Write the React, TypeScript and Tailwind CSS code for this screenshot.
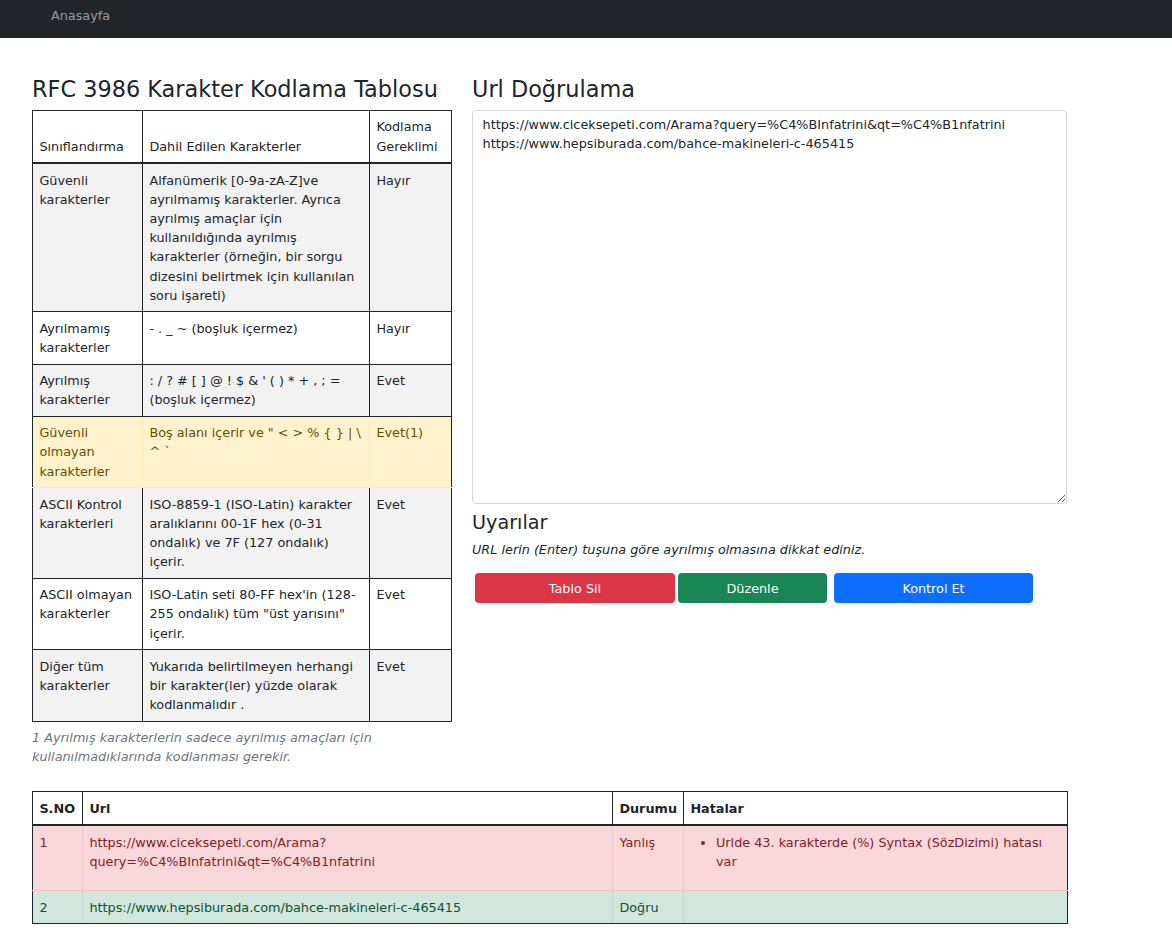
import React from "react";

type Tone = "plain" | "striped" | "warning" | "danger" | "success";

interface RfcRow {
  name: string;
  chars: string;
  needs: string;
  tone: Tone;
}

const rfcRows: RfcRow[] = [
  {
    name: "Güvenli karakterler",
    chars:
      "Alfanümerik [0-9a-zA-Z]ve ayrılmamış karakterler. Ayrıca ayrılmış amaçlar için kullanıldığında ayrılmış karakterler (örneğin, bir sorgu dizesini belirtmek için kullanılan soru işareti)",
    needs: "Hayır",
    tone: "striped",
  },
  { name: "Ayrılmamış karakterler", chars: "- . _ ~ (boşluk içermez)", needs: "Hayır", tone: "plain" },
  {
    name: "Ayrılmış karakterler",
    chars: ": / ? # [ ] @ ! $ & ' ( ) * + , ; = (boşluk içermez)",
    needs: "Evet",
    tone: "striped",
  },
  {
    name: "Güvenli olmayan karakterler",
    chars: 'Boş alanı içerir ve " < > % { } | \\ ^ `',
    needs: "Evet(1)",
    tone: "warning",
  },
  {
    name: "ASCII Kontrol karakterleri",
    chars: "ISO-8859-1 (ISO-Latin) karakter aralıklarını 00-1F hex (0-31 ondalık) ve 7F (127 ondalık) içerir.",
    needs: "Evet",
    tone: "striped",
  },
  {
    name: "ASCII olmayan karakterler",
    chars: 'ISO-Latin seti 80-FF hex\'in (128-255 ondalık) tüm "üst yarısını" içerir.',
    needs: "Evet",
    tone: "plain",
  },
  {
    name: "Diğer tüm karakterler",
    chars: "Yukarıda belirtilmeyen herhangi bir karakter(ler) yüzde olarak kodlanmalıdır .",
    needs: "Evet",
    tone: "striped",
  },
];

const toneRow: Record<Tone, string> = {
  plain: "bg-white text-[#212529]",
  striped: "bg-[#f2f2f2] text-[#212529]",
  warning: "bg-[#fff3cd] text-[#664d03]",
  danger: "bg-[#f8d7da] text-[#842029]",
  success: "bg-[#d1e7dd] text-[#0f5132]",
};

// inner vertical lines of contextual rows are tinted, outer edges stay dark
const toneInner: Record<Tone, string> = {
  plain: "border-[#212529]",
  striped: "border-[#212529]",
  warning: "border-[#ffecb5]",
  danger: "border-[#f5c2c7]",
  success: "border-[#badbcc]",
};

function Cell({
  tone,
  first,
  last,
  bottom,
  children,
}: {
  tone: Tone;
  first?: boolean;
  last?: boolean;
  bottom?: string;
  children: React.ReactNode;
}) {
  return (
    <td
      className={`border p-[6.4px] align-top ${toneInner[tone]} ${first ? "border-l-[#212529]" : ""} ${
        last ? "border-r-[#212529]" : ""
      } ${bottom ?? ""} border-t-[#212529]`}
    >
      {children}
    </td>
  );
}

export default function App() {
  return (
    <div className="min-h-[932px] bg-white font-['DejaVu_Sans',sans-serif] text-[12.8px] leading-[19.2px] text-[#212529]">
      {/* Navbar */}
      <nav className="h-[38px] bg-[#212529] pl-[51px] pt-[6.4px]">
        <a className="text-[rgba(255,255,255,0.55)]">Anasayfa</a>
      </nav>

      <main className="ml-[32px] w-[1036px] pt-[37.6px]">
        <div className="flex items-start gap-[20px]">
          {/* RFC table */}
          <div className="w-[420px]">
            <h3 className="mb-[7.5px] text-[22.4px] leading-[26.9px] font-normal">
              RFC 3986 Karakter Kodlama Tablosu
            </h3>
            <table className="w-[419px] table-fixed border-collapse border border-[#212529]">
              <colgroup>
                <col className="w-[110px]" />
                <col className="w-[227px]" />
                <col className="w-[82px]" />
              </colgroup>
              <thead>
                <tr>
                  <th className="border border-b-2 border-[#212529] p-[6.4px] text-left align-bottom font-normal">
                    Sınıflandırma
                  </th>
                  <th className="border border-b-2 border-[#212529] p-[6.4px] text-left align-bottom font-normal">
                    Dahil Edilen Karakterler
                  </th>
                  <th className="border border-b-2 border-[#212529] p-[6.4px] text-left align-bottom font-normal">
                    Kodlama Gereklimi
                  </th>
                </tr>
              </thead>
              <tbody>
                {rfcRows.map((row, i) => {
                  const bottom =
                    row.tone === "warning" ? "border-b-[#ffecb5]" : "border-b-[#212529]";
                  return (
                    <tr key={i} className={toneRow[row.tone]}>
                      <Cell tone={row.tone} first bottom={bottom}>
                        {row.name}
                      </Cell>
                      <Cell tone={row.tone} bottom={bottom}>
                        {row.chars}
                      </Cell>
                      <Cell tone={row.tone} last bottom={bottom}>
                        {row.needs}
                      </Cell>
                    </tr>
                  );
                })}
              </tbody>
            </table>
            <p className="pt-[6.4px] italic text-[#6c757d]">
              1 Ayrılmış karakterlerin sadece ayrılmış amaçları için kullanılmadıklarında kodlanması gerekir.
            </p>
          </div>

          {/* Url check */}
          <div className="w-[596px]">
            <h3 className="mb-[7.5px] text-[22.4px] leading-[26.9px] font-normal">Url Doğrulama</h3>
            <textarea
              className="block h-[394px] w-[595px] rounded-[4px] border border-[#d3d7db] px-[9.6px] py-[3.6px] text-[12.8px] leading-[19.2px] text-[#212529] outline-none"
              defaultValue={
                "https://www.ciceksepeti.com/Arama?query=%C4%BInfatrini&qt=%C4%B1nfatrini\nhttps://www.hepsiburada.com/bahce-makineleri-c-465415"
              }
            />
            <h4 className="mt-[6.5px] mb-[6.4px] text-[19.2px] leading-[23px] font-normal">Uyarılar</h4>
            <p className="italic">URL lerin (Enter) tuşuna göre ayrılmış olmasına dikkat ediniz.</p>
            <div className="mt-[14.4px] ml-[3px] flex">
              <button className="h-[30px] w-[200px] rounded-[4px] bg-[#dc3545] text-white">Tablo Sil</button>
              <button className="ml-[3px] h-[30px] w-[149px] rounded-[4px] bg-[#198754] text-white">
                Düzenle
              </button>
              <button className="ml-[7px] h-[30px] w-[199px] rounded-[4px] bg-[#0d6efd] text-white">
                Kontrol Et
              </button>
            </div>
          </div>
        </div>

        {/* Results */}
        <table className="mt-[25px] w-[1035px] table-fixed border-collapse border border-[#212529]">
          <colgroup>
            <col className="w-[50px]" />
            <col className="w-[530px]" />
            <col className="w-[71px]" />
            <col className="w-[384px]" />
          </colgroup>
          <thead>
            <tr>
              {["S.NO", "Url", "Durumu", "Hatalar"].map((h) => (
                <th
                  key={h}
                  className="border border-b-2 border-[#212529] p-[6.4px] text-left align-bottom font-bold"
                >
                  {h}
                </th>
              ))}
            </tr>
          </thead>
          <tbody>
            <tr className={toneRow.danger}>
              <Cell tone="danger" first bottom="border-b-[#f5c2c7]">
                1
              </Cell>
              <Cell tone="danger" bottom="border-b-[#f5c2c7]">
                https://www.ciceksepeti.com/Arama?query=%C4%BInfatrini&amp;qt=%C4%B1nfatrini
              </Cell>
              <Cell tone="danger" bottom="border-b-[#f5c2c7]">
                Yanlış
              </Cell>
              <Cell tone="danger" last bottom="border-b-[#f5c2c7]">
                <ul className="mb-[12.8px] list-disc pl-[25.6px]">
                  <li>Urlde 43. karakterde (%) Syntax (SözDizimi) hatası var</li>
                </ul>
              </Cell>
            </tr>
            <tr className={toneRow.success}>
              <Cell tone="success" first bottom="border-b-[#212529]">
                2
              </Cell>
              <Cell tone="success" bottom="border-b-[#212529]">
                https://www.hepsiburada.com/bahce-makineleri-c-465415
              </Cell>
              <Cell tone="success" bottom="border-b-[#212529]">
                Doğru
              </Cell>
              <Cell tone="success" last bottom="border-b-[#212529]">
                {""}
              </Cell>
            </tr>
          </tbody>
        </table>
      </main>
    </div>
  );
}
